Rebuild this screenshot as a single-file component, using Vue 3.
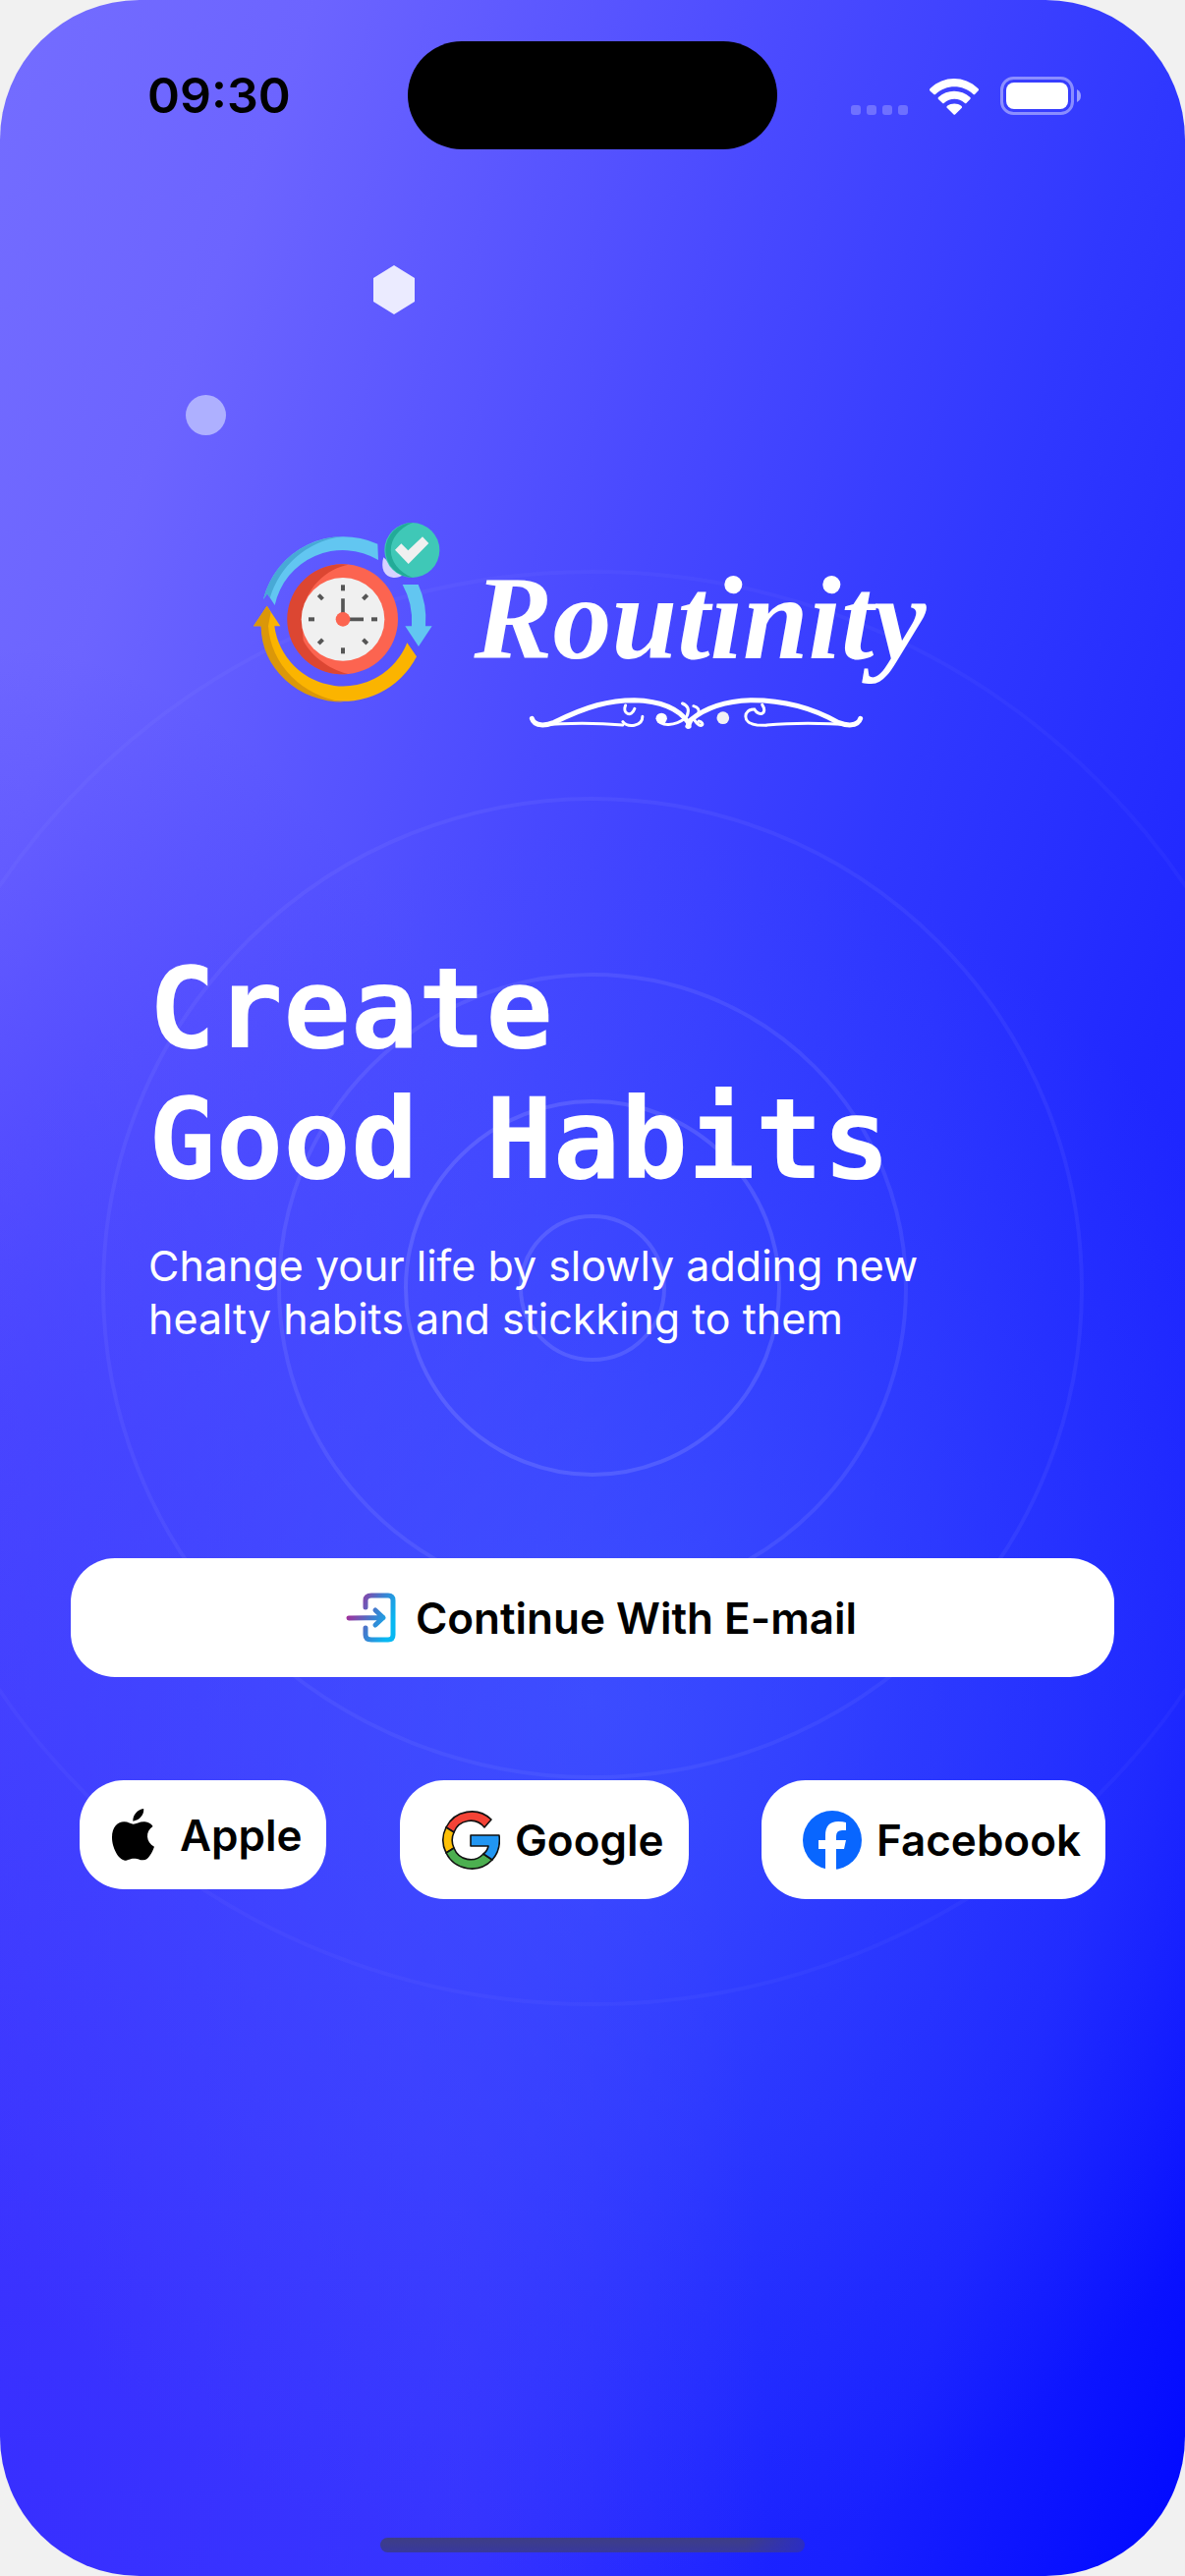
<script setup>
const rings = [
  { r: 73, opacity: 0.12 },
  { r: 190, opacity: 0.12 },
  { r: 319, opacity: 0.08 },
  { r: 498, opacity: 0.05 },
  { r: 729, opacity: 0.03 },
]
const ticks = [0, 45, 90, 135, 180, 225, 270, 315]
</script>

<template>
  <div class="screen">
    <svg class="rings" viewBox="-740 -740 1480 1480" aria-hidden="true">
      <circle v-for="ring in rings" :key="ring.r" :r="ring.r" fill="none" stroke="#fff" stroke-width="4" :stroke-opacity="ring.opacity" />
    </svg>
    <svg class="hexagon" viewBox="0 0 44 50" aria-hidden="true">
      <path d="M22 0 43 13V37L22 50 1 37V13Z" fill="#ebebff" />
    </svg>
    <span class="dot"></span>

    <header class="status">
      <time class="clock">09:30</time>
      <div class="island"></div>
      <div class="indicators">
        <svg class="signal" viewBox="0 0 58 10" aria-hidden="true">
          <g fill="#fff" fill-opacity="0.24">
            <rect width="10" height="10" rx="3" />
            <rect x="16" width="10" height="10" rx="3" />
            <rect x="32" width="10" height="10" rx="3" />
            <rect x="48" width="10" height="10" rx="3" />
          </g>
        </svg>
        <svg class="wifi" viewBox="0 0 150 111" aria-hidden="true">
          <g fill="#fff">
            <path d="M2 30Q-2 34 2 38L13 48Q16 50 19 47C50 17 102 17 133 47Q136 50 139 47L149 37Q152 34 148 30C106-10 44-10 2 30Z" />
            <path d="M27 57Q24 60 27 63L39 74Q42 77 45 74C62 58 90 58 107 74Q110 77 113 74L124 63Q127 60 124 57C96 32 54 32 27 57Z" />
            <path d="M54 83Q50 87 54 90L73 109Q76 112 79 109L98 90Q101 87 97 83C85 74 67 74 54 83Z" />
          </g>
        </svg>
        <svg class="battery" viewBox="0 0 82 39" aria-hidden="true">
          <rect x="1.5" y="1.5" width="72" height="36" rx="12" fill="none" stroke="#fff" stroke-opacity="0.42" stroke-width="3" />
          <rect x="6" y="6" width="63" height="27" rx="8" fill="#fff" />
          <path d="M78 13Q82 15 82 19.500T78 26Z" fill="#fff" fill-opacity="0.5" />
        </svg>
      </div>
    </header>

    <main class="content">
      <div class="brand">
        <svg class="emblem" viewBox="50 60 579 561" aria-hidden="true">
          <path d="M434 180 432 131A252 252 0 0 0 83 300L95 283 118 318A212 212 0 0 1 434 180Z" fill="#62c6f1" />
          <path d="M318 109A252 252 0 0 0 83 300L95 283 103 296A265 265 0 0 1 318 109Z" fill="#48a9d6" />
          <path d="M508 255H556A252 252 0 0 1 578 382H598L557 444 516 382H536A230 230 0 0 0 508 255Z" fill="#62c6f1" />
          <path d="M94 320 53 382H76A252 252 0 0 0 551 475L522 433A211 211 0 0 1 117 382H135Z" fill="#fbb400" />
          <path d="M94 320 53 382H76A252 232 0 0 0 328 614A270 250 0 0 1 98 382L106 340Z" fill="#db9709" />
          <circle cx="326" cy="361" r="168" fill="#fc6450" />
          <path d="M342 194A168 168 0 1 0 342 528C276 512 223 464 205 425L200 360C205 265 280 205 342 194Z" fill="#dc4632" />
          <circle cx="326" cy="361" r="127" fill="#f0f0f0" />
          <rect v-for="tick in ticks" :key="tick" x="320" y="256" width="12" height="18" fill="#555" :transform="`rotate(${tick} 326 361)`" />
          <path d="M326 298V361H389" fill="none" stroke="#555" stroke-width="11" />
          <circle cx="326" cy="361" r="22" fill="#fc6450" />
          <path d="M450 172C440 205 452 232 480 234Q498 235 508 226Z" fill="#d6d3ff" />
          <circle cx="537" cy="150" r="84" fill="#3fc8b7" />
          <path d="M540 66A84 84 0 0 0 540 234C450 200 450 100 540 66Z" fill="#22ab98" />
          <path d="M485 149 504 130 525 151 569 109 588 129 526 192Z" fill="#f0f0f0" />
        </svg>
        <div class="wordmark">
          <span class="name">Routinity</span>
          <svg class="flourish" viewBox="232 566 1024 102" aria-hidden="true">
            <g fill="none" stroke="#fff" stroke-linecap="round">
              <path d="M242 636C250 662 285 658 310 648C410 598 480 580 555 580C630 582 690 605 720 648L722 660" stroke-width="15" />
              <path d="M1246 636C1238 662 1203 658 1178 648C1090 598 1000 580 915 580C835 582 770 605 728 640L718 660" stroke-width="15" />
              <path d="M260 656C340 650 430 648 520 656M1228 656C1140 650 1050 648 960 656" stroke-width="9" />
              <path d="M528 596C518 622 546 634 556 606M580 630C580 662 534 664 520 646M946 594C964 622 936 632 922 608C890 606 880 650 930 656L958 657" stroke-width="9" />
              <path d="M626 636C634 662 680 660 712 634M702 590Q728 600 716 628M736 598Q758 604 750 622M738 640C760 674 774 648 752 644" stroke-width="9" />
            </g>
            <circle cx="638" cy="636" r="17" fill="#fff" />
            <circle cx="826" cy="634" r="19" fill="#f1f1f4" />
          </svg>
        </div>
      </div>

      <h1 class="title">Create<br />Good Habits</h1>
      <p class="subtitle">Change your life by slowly adding new<br />healty habits and stickking to them</p>

      <button class="pill email" type="button">
        <svg class="enter-icon" viewBox="0 0 51 51" aria-hidden="true">
          <defs>
            <linearGradient id="enter" gradientUnits="userSpaceOnUse" x1="6" y1="14" x2="47" y2="32">
              <stop offset="0" stop-color="#a0309b" />
              <stop offset="0.55" stop-color="#3d7fd0" />
              <stop offset="1" stop-color="#08b8f2" />
            </linearGradient>
          </defs>
          <g fill="none" stroke="url(#enter)" stroke-width="5" stroke-linecap="round" stroke-linejoin="round">
            <path d="M20 15V8Q20 3 26 3H43Q48 3 48 8V43Q48 48 43 48H26Q20 48 20 43V36" />
            <path d="M3 26 38 25.500M30 18 38 25.500 30 33" />
          </g>
        </svg>
        <span>Continue With E-mail</span>
      </button>

      <div class="providers">
        <button class="pill apple" type="button">
          <svg class="apple-icon" viewBox="154 155 119 159" preserveAspectRatio="none" aria-hidden="true">
            <path d="M213 193C212 175 225 158 243 155C245 174 231 190 213 193Z" />
            <path d="M214 202C222 202 233 194 246 195C257 196 264 201 269 209C247 224 249 258 273 271C267 289 256 312 242 312C232 312 228 307 216 307C204 307 199 313 190 313C172 311 154 274 154 243C154 211 170 195 188 195C199 195 208 202 214 202Z" />
          </svg>
          <span>Apple</span>
        </button>
        <button class="pill wide" type="button">
          <svg class="logo-icon" viewBox="0 0 60 60" aria-hidden="true">
            <g stroke="#111" stroke-width="1.6" stroke-linejoin="round">
              <path d="M5 17A29 29 0 0 1 51 9L44 17A18 18 0 0 0 13 22Z" fill="#f44336" />
              <path d="M5 17A29 29 0 0 0 5 43L13 38A19 19 0 0 1 13 22Z" fill="#ffc107" />
              <path d="M5 43A29 29 0 0 0 52 50L43 44A18 18 0 0 1 13 38Z" fill="#4caf50" />
              <path d="M30 25H59Q61 40 52 50L43 44Q47 41 48 36H30Z" fill="#2196f3" />
            </g>
          </svg>
          <span>Google</span>
        </button>
        <button class="pill wide" type="button">
          <svg class="logo-icon" viewBox="0 0 60 60" aria-hidden="true">
            <circle cx="30" cy="30" r="30" fill="#0866ff" />
            <path d="M23 60V39H16V30H23V25Q23 11 36 11Q41 11 44 12V20H40Q34 20 34 26V30H44L42 39H34V60Z" fill="#fff" />
          </svg>
          <span>Facebook</span>
        </button>
      </div>
    </main>

    <div class="home-indicator"></div>
  </div>
</template>

<style>
body {
  background: #f1f1f1;
}
</style>

<style scoped>
.screen {
  position: relative;
  display: flex;
  flex-direction: column;
  box-sizing: border-box;
  min-height: 100vh;
  padding: 42px 0 24px;
  overflow: hidden;
  border-radius: 142px;
  background:
    radial-gradient(ellipse 65% 34% at 50% 66%, rgba(66, 88, 255, 0.65), rgba(66, 88, 255, 0)),
    radial-gradient(ellipse 65% 75% at 0% 100%, rgba(54, 44, 255, 0.9), rgba(62, 54, 255, 0.65) 60%, rgba(66, 58, 255, 0)),
    linear-gradient(110deg, #746dff 0%, #6c64ff 15%, #4a4aff 38%, #3038ff 56%, #2028ff 72%, #1820ff 84%, #0008ff 100%);
  font-family: Inter, "Liberation Sans", sans-serif;
  color: #fff;
}

.rings {
  position: absolute;
  top: 50%;
  left: 50%;
  width: 1480px;
  height: 1480px;
  transform: translate(-50%, -50%);
}

.hexagon {
  position: absolute;
  top: 270px;
  left: 379px;
  width: 44px;
  height: 50px;
}

.dot {
  position: absolute;
  top: 402px;
  left: 189px;
  width: 41px;
  height: 41px;
  border-radius: 50%;
  background: #aeb0ff;
}

.status {
  position: relative;
  display: grid;
  grid-template-columns: 1fr 376px 1fr;
  align-items: center;
}

.clock {
  margin-left: 150px;
  font-size: 50px;
  font-weight: 600;
  line-height: 60px;
  color: #000;
}

.island {
  height: 110px;
  border-radius: 60px;
  background: #000;
}

.indicators {
  display: flex;
  justify-content: flex-end;
  align-items: flex-end;
  gap: 22px;
  margin-right: 106px;
}

.signal {
  width: 58px;
  height: 10px;
}

.wifi {
  width: 50px;
  height: 37px;
}

.battery {
  width: 82px;
  height: 39px;
}

.content {
  position: relative;
  display: flex;
  flex-direction: column;
  padding-top: 378px;
}

.brand {
  display: flex;
  justify-content: center;
  gap: 32px;
  padding-right: 6px;
}

.emblem {
  width: 193px;
  height: 187px;
}

.wordmark {
  display: flex;
  flex-direction: column;
  align-items: center;
}

.name {
  height: 178px;
  font-family: "Liberation Serif", serif;
  font-size: 120px;
  font-style: italic;
  font-weight: 700;
  line-height: 200px;
}

.flourish {
  width: 341px;
  height: 34px;
  margin-right: 8px;
}

.title {
  margin: 218px 0 0;
  padding: 0 151px;
  font-family: "DejaVu Sans Mono", monospace;
  font-size: 114px;
  font-weight: 700;
  line-height: 133px;
}

.subtitle {
  margin: 35px 0 0;
  padding: 0 151px;
  font-size: 43px;
  line-height: 54px;
}

.pill {
  display: flex;
  align-items: center;
  height: 121px;
  border: 0;
  border-radius: 45px;
  background: #fff;
  font-family: inherit;
  font-size: 44px;
  font-weight: 600;
  color: #000;
}

.email {
  justify-content: center;
  gap: 20px;
  margin: 217px 72px 0;
  padding: 0 0 0 18px;
}

.enter-icon {
  width: 51px;
  height: 51px;
}

.providers {
  display: flex;
  justify-content: space-between;
  align-items: flex-start;
  margin: 105px 81px 0;
}

.apple {
  gap: 26px;
  height: 111px;
  padding: 0 25px 0 33px;
}

.apple-icon {
  width: 43px;
  height: 53px;
}

.wide {
  gap: 15px;
  padding: 0 25px 0 42px;
}

.logo-icon {
  width: 60px;
  height: 60px;
}

.home-indicator {
  align-self: center;
  width: 432px;
  height: 15px;
  margin-top: auto;
  border-radius: 8px;
  background:
    linear-gradient(to right, rgba(42, 44, 190, 0) 86%, rgba(42, 44, 200, 0.9)),
    linear-gradient(to bottom, #3e3e84, #38389e);
}
</style>
